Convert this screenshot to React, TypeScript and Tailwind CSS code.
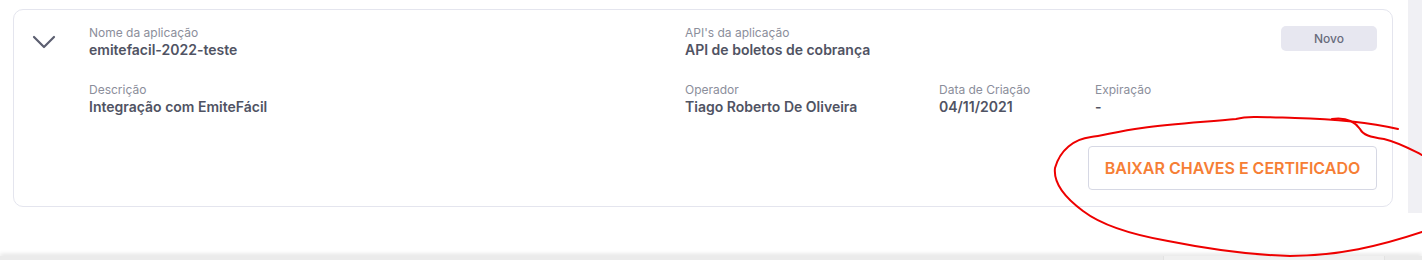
const font = { fontFamily: "Inter, 'Noto Sans', sans-serif" };

function Field({ label, value }: { label: string; value: string }) {
  return (
    <div className="flex flex-col">
      <span className="text-xs leading-[15px] text-[#8b8e9b]">{label}</span>
      <span className="text-sm leading-5 font-semibold text-[#505363]">{value}</span>
    </div>
  );
}

function Chevron() {
  return (
    <svg width="24" height="14" viewBox="0 0 24 14" fill="none">
      <polyline
        points="2,2 12,12 22,2"
        stroke="#5c5f70"
        strokeWidth="2.2"
        strokeLinecap="round"
        strokeLinejoin="round"
      />
    </svg>
  );
}

function Scribble() {
  return (
    <svg
      className="pointer-events-none absolute inset-0"
      width="1422"
      height="260"
      viewBox="0 0 1422 260"
      fill="none"
    >
      <path
        d="M1398 129 C1372 123 1336 119 1295 118 C1262 117 1248 116 1236 119 C1205 122 1172 124 1142 128 C1118 131 1102 136 1091 137 C1074 139 1060 150 1055 168 C1053 185 1068 200 1083 211 C1100 224 1128 234 1168 241 C1208 249 1250 255 1290 256 C1338 256 1380 246 1422 232"
        stroke="#ee0000"
        strokeWidth="2"
        strokeLinecap="round"
      />
      <path
        d="M1332 119 C1346 117 1355 122 1360 129 C1363 135 1370 137 1384 139 C1400 143 1410 149 1422 155"
        stroke="#ee0000"
        strokeWidth="2"
        strokeLinecap="round"
      />
    </svg>
  );
}

export default function App() {
  return (
    <div className="relative h-[260px] w-[1422px] overflow-hidden bg-white" style={font}>
      <div className="flex h-[256px]">
        <div className="w-[1408px] pl-[13px] pr-[15px] pt-[9px]">
          <div className="flex rounded-[10px] border border-[#e4e5ee] bg-white">
            <div className="w-[75px] shrink-0 pl-[18px] pt-[25px]">
              <Chevron />
            </div>
            <div className="flex-1 pr-[15px] pt-[15px] pb-[16px]">
              <div className="flex items-start justify-between">
                <div className="flex">
                  <div className="w-[596px]">
                    <Field label="Nome da aplicação" value="emitefacil-2022-teste" />
                  </div>
                  <Field label="API's da aplicação" value="API de boletos de cobrança" />
                </div>
                <span className="mt-px flex h-[25px] w-[96px] items-center justify-center rounded-[5px] bg-[#e7e7f0] text-xs font-medium text-[#676b7c]">
                  Novo
                </span>
              </div>
              <div className="mt-[22px] flex">
                <div className="w-[596px]">
                  <Field label="Descrição" value="Integração com EmiteFácil" />
                </div>
                <div className="w-[254px]">
                  <Field label="Operador" value="Tiago Roberto De Oliveira" />
                </div>
                <div className="w-[156px]">
                  <Field label="Data de Criação" value="04/11/2021" />
                </div>
                <Field label="Expiração" value="-" />
              </div>
              <div className="mt-[29px] flex justify-end">
                <button className="h-[44px] w-[289px] rounded-[4px] border border-[#d6d8e4] bg-white text-base font-semibold text-[#f67e35]">
                  BAIXAR CHAVES E CERTIFICADO
                </button>
              </div>
            </div>
          </div>
        </div>
        <div className="h-[213px] w-[14px] bg-[#f0f0f4]" />
      </div>
      <div className="relative h-[4px] bg-[#ebebeb] shadow-[0_-2px_4px_rgba(0,0,0,0.12)]">
        <div className="absolute left-[1163px] top-0 h-[4px] w-[222px] border-x border-[#e2e2e2] bg-[#f0f0f0]" />
      </div>
      <Scribble />
    </div>
  );
}
